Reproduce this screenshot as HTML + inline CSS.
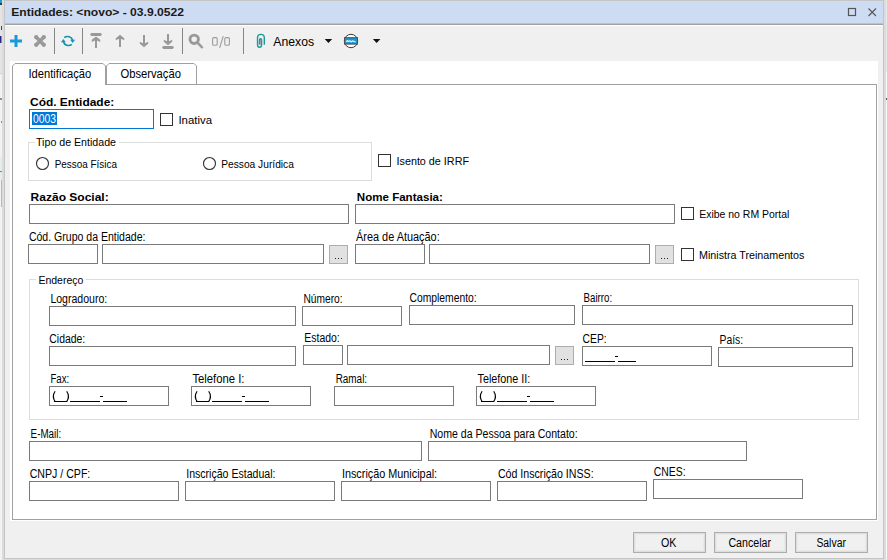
<!DOCTYPE html>
<html><head><meta charset="utf-8"><style>
html,body{margin:0;padding:0;width:887px;height:560px;overflow:hidden;background:#e8e8e8}
svg{display:block}
text{font-family:"Liberation Sans",sans-serif}
</style></head><body>
<svg width="887" height="560" viewBox="0 0 887 560">
<rect x="0" y="0" width="887" height="560" fill="#f2f2f2" />
<rect x="2" y="0" width="2" height="560" fill="#dcdcdc" />
<rect x="884" y="0" width="2" height="560" fill="#dcdcdc" />
<rect x="886" y="0" width="1" height="560" fill="#e8e8e8" />
<rect x="2" y="559" width="884" height="1" fill="#dcdcdc" />
<rect x="0" y="5" width="2" height="68" fill="#e4e4e4" />
<rect x="0" y="73" width="2" height="1" fill="#d0d0d0" />
<rect x="0" y="98" width="2" height="2" fill="#909090" />
<rect x="1" y="121" width="1" height="2" fill="#909090" />
<rect x="0" y="157" width="2" height="23" fill="#e4eeee" />
<rect x="0" y="171" width="2" height="1" fill="#3a9ad0" />
<rect x="1" y="180" width="1" height="27" fill="#b8b8b8" />
<rect x="0" y="0" width="2" height="3" fill="#1e9ac8" />
<rect x="0" y="3" width="2" height="2" fill="#343a40" />
<rect x="1" y="26" width="1" height="4" fill="#5a3a60" />
<rect x="0" y="36" width="1.5" height="7" fill="#2a2a85" />
<rect x="886" y="72" width="1" height="488" fill="#f6f6f6" />
<rect x="886" y="98" width="1" height="2" fill="#555" />
<rect x="4" y="0" width="880" height="559" fill="#c4c4c4" />
<rect x="5" y="1" width="878" height="557" fill="#f0f0f0" />
<rect x="5" y="0" width="878" height="1" fill="#c6c6c6" />
<rect x="5" y="1" width="878" height="22" fill="#cddcf3" />
<rect x="5" y="23" width="878" height="1" fill="#c0c0c0" />
<rect x="5" y="24" width="878" height="1" fill="#a0a0a0" />
<rect x="5" y="25" width="878" height="1" fill="#ffffff" />
<text x="11.2" y="16" font-size="11.5" font-weight="bold" fill="#1a1a1a" textLength="172.7" lengthAdjust="spacingAndGlyphs">Entidades: &lt;novo&gt; - 03.9.0522</text>
<rect x="848.5" y="8.5" width="7" height="7" fill="none" stroke="#555" stroke-width="1.2"/>
<path d="M868.5 8.5 L876 16 M876 8.5 L868.5 16" stroke="#555" stroke-width="1.1" fill="none"/>
<rect x="54" y="28" width="1" height="26" fill="#858585" />
<rect x="82" y="28" width="1" height="26" fill="#858585" />
<rect x="182" y="28" width="1" height="26" fill="#858585" />
<rect x="243" y="28" width="1" height="26" fill="#858585" />
<rect x="10" y="61" width="868" height="460" fill="#ffffff" />
<rect x="12" y="84" width="865" height="1" fill="#a0a0a0" />
<rect x="12" y="519" width="865" height="1" fill="#a0a0a0" />
<rect x="12" y="84" width="1" height="436" fill="#a0a0a0" />
<rect x="876" y="84" width="1" height="436" fill="#a0a0a0" />
<path d="M12.5 85 V66 L15 63.5 H103 L105.5 66 V85" fill="#fff" stroke="#a0a0a0" stroke-width="1"/>
<rect x="13" y="84" width="92" height="1" fill="#ffffff" />
<path d="M106.5 84 V66 L109 63.5 H194 L196.5 66 V84" fill="#fff" stroke="#a0a0a0" stroke-width="1"/>
<text x="28.5" y="78" font-size="12" fill="#000" textLength="62.8" lengthAdjust="spacingAndGlyphs">Identificação</text>
<text x="120.4" y="78" font-size="12" fill="#000" textLength="60.6" lengthAdjust="spacingAndGlyphs">Observação</text>
<text x="30" y="106" font-size="11.5" font-weight="bold" fill="#000" textLength="84.3" lengthAdjust="spacingAndGlyphs">Cód. Entidade:</text>
<rect x="29" y="109" width="125" height="1" fill="#0078d7" />
<rect x="29" y="128" width="125" height="1" fill="#0078d7" />
<rect x="29" y="109" width="1" height="20" fill="#0078d7" />
<rect x="153" y="109" width="1" height="20" fill="#0078d7" />
<rect x="30" y="110" width="123" height="18" fill="#ffffff" />
<rect x="32" y="112" width="25" height="13" fill="#0078d7" />
<text x="33" y="123" font-size="12" fill="#ffffff" textLength="23" lengthAdjust="spacingAndGlyphs">0003</text>
<rect x="160" y="113" width="13" height="1" fill="#333333" />
<rect x="160" y="125" width="13" height="1" fill="#333333" />
<rect x="160" y="113" width="1" height="13" fill="#333333" />
<rect x="172" y="113" width="1" height="13" fill="#333333" />
<rect x="161" y="114" width="11" height="11" fill="#ffffff" />
<text x="178.4" y="124" font-size="11.5" fill="#000" textLength="33.6" lengthAdjust="spacingAndGlyphs">Inativa</text>
<rect x="28" y="142" width="344" height="1" fill="#dcdcdc" />
<rect x="28" y="180" width="344" height="1" fill="#dcdcdc" />
<rect x="28" y="142" width="1" height="39" fill="#dcdcdc" />
<rect x="371" y="142" width="1" height="39" fill="#dcdcdc" />
<rect x="35" y="140" width="84" height="4" fill="#ffffff" />
<text x="36" y="146" font-size="11.5" fill="#000" textLength="80" lengthAdjust="spacingAndGlyphs">Tipo de Entidade</text>
<circle cx="42.5" cy="163.5" r="6" fill="#fff" stroke="#333" stroke-width="1.15"/>
<circle cx="209.5" cy="163.5" r="6" fill="#fff" stroke="#333" stroke-width="1.15"/>
<text x="54.7" y="168" font-size="11.5" fill="#000" textLength="62.3" lengthAdjust="spacingAndGlyphs">Pessoa Física</text>
<text x="221.2" y="168" font-size="11.5" fill="#000" textLength="72.7" lengthAdjust="spacingAndGlyphs">Pessoa Jurídica</text>
<rect x="378" y="154" width="13" height="1" fill="#333333" />
<rect x="378" y="166" width="13" height="1" fill="#333333" />
<rect x="378" y="154" width="1" height="13" fill="#333333" />
<rect x="390" y="154" width="1" height="13" fill="#333333" />
<rect x="379" y="155" width="11" height="11" fill="#ffffff" />
<text x="396.5" y="165" font-size="11.5" fill="#000" textLength="72.5" lengthAdjust="spacingAndGlyphs">Isento de IRRF</text>
<text x="30.6" y="201" font-size="11.5" font-weight="bold" fill="#000" textLength="78.1" lengthAdjust="spacingAndGlyphs">Razão Social:</text>
<text x="356.8" y="201" font-size="11.5" font-weight="bold" fill="#000" textLength="86.1" lengthAdjust="spacingAndGlyphs">Nome Fantasia:</text>
<rect x="29" y="204" width="320" height="1" fill="#7a7a7a" />
<rect x="29" y="223" width="320" height="1" fill="#7a7a7a" />
<rect x="29" y="204" width="1" height="20" fill="#7a7a7a" />
<rect x="348" y="204" width="1" height="20" fill="#7a7a7a" />
<rect x="30" y="205" width="318" height="18" fill="#fff" />
<rect x="355" y="204" width="320" height="1" fill="#7a7a7a" />
<rect x="355" y="223" width="320" height="1" fill="#7a7a7a" />
<rect x="355" y="204" width="1" height="20" fill="#7a7a7a" />
<rect x="674" y="204" width="1" height="20" fill="#7a7a7a" />
<rect x="356" y="205" width="318" height="18" fill="#fff" />
<rect x="681" y="207" width="13" height="1" fill="#333333" />
<rect x="681" y="219" width="13" height="1" fill="#333333" />
<rect x="681" y="207" width="1" height="13" fill="#333333" />
<rect x="693" y="207" width="1" height="13" fill="#333333" />
<rect x="682" y="208" width="11" height="11" fill="#ffffff" />
<text x="699.2" y="218" font-size="11.5" fill="#000" textLength="90.2" lengthAdjust="spacingAndGlyphs">Exibe no RM Portal</text>
<text x="28.9" y="241" font-size="12" fill="#000" textLength="116.6" lengthAdjust="spacingAndGlyphs">Cód. Grupo da Entidade:</text>
<rect x="28" y="244" width="70" height="1" fill="#7a7a7a" />
<rect x="28" y="263" width="70" height="1" fill="#7a7a7a" />
<rect x="28" y="244" width="1" height="20" fill="#7a7a7a" />
<rect x="97" y="244" width="1" height="20" fill="#7a7a7a" />
<rect x="29" y="245" width="68" height="18" fill="#fff" />
<rect x="102" y="244" width="222" height="1" fill="#7a7a7a" />
<rect x="102" y="263" width="222" height="1" fill="#7a7a7a" />
<rect x="102" y="244" width="1" height="20" fill="#7a7a7a" />
<rect x="323" y="244" width="1" height="20" fill="#7a7a7a" />
<rect x="103" y="245" width="220" height="18" fill="#fff" />
<rect x="329" y="245" width="19" height="1" fill="#adadad" />
<rect x="329" y="263" width="19" height="1" fill="#adadad" />
<rect x="329" y="245" width="1" height="19" fill="#adadad" />
<rect x="347" y="245" width="1" height="19" fill="#adadad" />
<rect x="330" y="246" width="17" height="17" fill="#e1e1e1" />
<rect x="335" y="258" width="1" height="1" fill="#222" />
<rect x="338" y="258" width="1" height="1" fill="#222" />
<rect x="341" y="258" width="1" height="1" fill="#222" />
<text x="356" y="241" font-size="12" fill="#000" textLength="83.7" lengthAdjust="spacingAndGlyphs">Área de Atuação:</text>
<rect x="355" y="244" width="70" height="1" fill="#7a7a7a" />
<rect x="355" y="263" width="70" height="1" fill="#7a7a7a" />
<rect x="355" y="244" width="1" height="20" fill="#7a7a7a" />
<rect x="424" y="244" width="1" height="20" fill="#7a7a7a" />
<rect x="356" y="245" width="68" height="18" fill="#fff" />
<rect x="429" y="244" width="221" height="1" fill="#7a7a7a" />
<rect x="429" y="263" width="221" height="1" fill="#7a7a7a" />
<rect x="429" y="244" width="1" height="20" fill="#7a7a7a" />
<rect x="649" y="244" width="1" height="20" fill="#7a7a7a" />
<rect x="430" y="245" width="219" height="18" fill="#fff" />
<rect x="655" y="245" width="19" height="1" fill="#adadad" />
<rect x="655" y="263" width="19" height="1" fill="#adadad" />
<rect x="655" y="245" width="1" height="19" fill="#adadad" />
<rect x="673" y="245" width="1" height="19" fill="#adadad" />
<rect x="656" y="246" width="17" height="17" fill="#e1e1e1" />
<rect x="661" y="258" width="1" height="1" fill="#222" />
<rect x="664" y="258" width="1" height="1" fill="#222" />
<rect x="667" y="258" width="1" height="1" fill="#222" />
<rect x="681" y="248" width="13" height="1" fill="#333333" />
<rect x="681" y="260" width="13" height="1" fill="#333333" />
<rect x="681" y="248" width="1" height="13" fill="#333333" />
<rect x="693" y="248" width="1" height="13" fill="#333333" />
<rect x="682" y="249" width="11" height="11" fill="#ffffff" />
<text x="699" y="259" font-size="11.5" fill="#000" textLength="105.4" lengthAdjust="spacingAndGlyphs">Ministra Treinamentos</text>
<rect x="29" y="279" width="830" height="1" fill="#dcdcdc" />
<rect x="29" y="419" width="830" height="1" fill="#dcdcdc" />
<rect x="29" y="279" width="1" height="141" fill="#dcdcdc" />
<rect x="858" y="279" width="1" height="141" fill="#dcdcdc" />
<rect x="36" y="276" width="50" height="6" fill="#ffffff" />
<text x="38.4" y="284" font-size="11.5" fill="#000" textLength="45" lengthAdjust="spacingAndGlyphs">Endereço</text>
<text x="50.4" y="303" font-size="12" fill="#000" textLength="56.8" lengthAdjust="spacingAndGlyphs">Logradouro:</text>
<rect x="49" y="306" width="247" height="1" fill="#7a7a7a" />
<rect x="49" y="325" width="247" height="1" fill="#7a7a7a" />
<rect x="49" y="306" width="1" height="20" fill="#7a7a7a" />
<rect x="295" y="306" width="1" height="20" fill="#7a7a7a" />
<rect x="50" y="307" width="245" height="18" fill="#fff" />
<text x="303.5" y="303" font-size="12" fill="#000" textLength="39.1" lengthAdjust="spacingAndGlyphs">Número:</text>
<rect x="302" y="306" width="100" height="1" fill="#7a7a7a" />
<rect x="302" y="325" width="100" height="1" fill="#7a7a7a" />
<rect x="302" y="306" width="1" height="20" fill="#7a7a7a" />
<rect x="401" y="306" width="1" height="20" fill="#7a7a7a" />
<rect x="303" y="307" width="98" height="18" fill="#fff" />
<text x="409.5" y="302" font-size="12" fill="#000" textLength="67.2" lengthAdjust="spacingAndGlyphs">Complemento:</text>
<rect x="409" y="305" width="166" height="1" fill="#7a7a7a" />
<rect x="409" y="324" width="166" height="1" fill="#7a7a7a" />
<rect x="409" y="305" width="1" height="20" fill="#7a7a7a" />
<rect x="574" y="305" width="1" height="20" fill="#7a7a7a" />
<rect x="410" y="306" width="164" height="18" fill="#fff" />
<text x="583.6" y="302" font-size="12" fill="#000" textLength="28.5" lengthAdjust="spacingAndGlyphs">Bairro:</text>
<rect x="582" y="305" width="271" height="1" fill="#7a7a7a" />
<rect x="582" y="324" width="271" height="1" fill="#7a7a7a" />
<rect x="582" y="305" width="1" height="20" fill="#7a7a7a" />
<rect x="852" y="305" width="1" height="20" fill="#7a7a7a" />
<rect x="583" y="306" width="269" height="18" fill="#fff" />
<text x="49.3" y="343" font-size="12" fill="#000" textLength="35.9" lengthAdjust="spacingAndGlyphs">Cidade:</text>
<rect x="49" y="346" width="247" height="1" fill="#7a7a7a" />
<rect x="49" y="365" width="247" height="1" fill="#7a7a7a" />
<rect x="49" y="346" width="1" height="20" fill="#7a7a7a" />
<rect x="295" y="346" width="1" height="20" fill="#7a7a7a" />
<rect x="50" y="347" width="245" height="18" fill="#fff" />
<text x="304.3" y="342" font-size="12" fill="#000" textLength="35.4" lengthAdjust="spacingAndGlyphs">Estado:</text>
<rect x="303" y="345" width="40" height="1" fill="#7a7a7a" />
<rect x="303" y="364" width="40" height="1" fill="#7a7a7a" />
<rect x="303" y="345" width="1" height="20" fill="#7a7a7a" />
<rect x="342" y="345" width="1" height="20" fill="#7a7a7a" />
<rect x="304" y="346" width="38" height="18" fill="#fff" />
<rect x="347" y="345" width="203" height="1" fill="#7a7a7a" />
<rect x="347" y="364" width="203" height="1" fill="#7a7a7a" />
<rect x="347" y="345" width="1" height="20" fill="#7a7a7a" />
<rect x="549" y="345" width="1" height="20" fill="#7a7a7a" />
<rect x="348" y="346" width="201" height="18" fill="#fff" />
<rect x="555" y="346" width="19" height="1" fill="#adadad" />
<rect x="555" y="364" width="19" height="1" fill="#adadad" />
<rect x="555" y="346" width="1" height="19" fill="#adadad" />
<rect x="573" y="346" width="1" height="19" fill="#adadad" />
<rect x="556" y="347" width="17" height="17" fill="#e1e1e1" />
<rect x="561" y="359" width="1" height="1" fill="#222" />
<rect x="564" y="359" width="1" height="1" fill="#222" />
<rect x="567" y="359" width="1" height="1" fill="#222" />
<text x="582.6" y="343" font-size="12" fill="#000" textLength="24" lengthAdjust="spacingAndGlyphs">CEP:</text>
<rect x="582" y="346" width="130" height="1" fill="#7a7a7a" />
<rect x="582" y="365" width="130" height="1" fill="#7a7a7a" />
<rect x="582" y="346" width="1" height="20" fill="#7a7a7a" />
<rect x="711" y="346" width="1" height="20" fill="#7a7a7a" />
<rect x="583" y="347" width="128" height="18" fill="#fff" />
<text x="719.5" y="344" font-size="12" fill="#000" textLength="23.6" lengthAdjust="spacingAndGlyphs">País:</text>
<rect x="718" y="347" width="135" height="1" fill="#7a7a7a" />
<rect x="718" y="366" width="135" height="1" fill="#7a7a7a" />
<rect x="718" y="347" width="1" height="20" fill="#7a7a7a" />
<rect x="852" y="347" width="1" height="20" fill="#7a7a7a" />
<rect x="719" y="348" width="133" height="18" fill="#fff" />
<text x="50.5" y="383" font-size="12" fill="#000" textLength="18.7" lengthAdjust="spacingAndGlyphs">Fax:</text>
<rect x="49" y="386" width="120" height="1" fill="#7a7a7a" />
<rect x="49" y="405" width="120" height="1" fill="#7a7a7a" />
<rect x="49" y="386" width="1" height="20" fill="#7a7a7a" />
<rect x="168" y="386" width="1" height="20" fill="#7a7a7a" />
<rect x="50" y="387" width="118" height="18" fill="#fff" />
<path d="M55.1 391.2 Q51.6 396.4 55.1 401.6 M66.7 391.2 Q70.2 396.4 66.7 401.6" fill="none" stroke="#000" stroke-width="1.15"/>
<rect x="54" y="401" width="13" height="1" fill="#000" />
<rect x="70" y="401" width="30" height="1" fill="#000" />
<rect x="100" y="396" width="3" height="1" fill="#000" />
<rect x="103" y="401" width="24" height="1" fill="#000" />
<text x="192.4" y="383" font-size="12" fill="#000" textLength="52.1" lengthAdjust="spacingAndGlyphs">Telefone I:</text>
<rect x="191" y="386" width="120" height="1" fill="#7a7a7a" />
<rect x="191" y="405" width="120" height="1" fill="#7a7a7a" />
<rect x="191" y="386" width="1" height="20" fill="#7a7a7a" />
<rect x="310" y="386" width="1" height="20" fill="#7a7a7a" />
<rect x="192" y="387" width="118" height="18" fill="#fff" />
<path d="M197.1 391.2 Q193.6 396.4 197.1 401.6 M208.7 391.2 Q212.2 396.4 208.7 401.6" fill="none" stroke="#000" stroke-width="1.15"/>
<rect x="196" y="401" width="13" height="1" fill="#000" />
<rect x="212" y="401" width="30" height="1" fill="#000" />
<rect x="242" y="396" width="3" height="1" fill="#000" />
<rect x="245" y="401" width="24" height="1" fill="#000" />
<text x="335.7" y="383" font-size="12" fill="#000" textLength="31.4" lengthAdjust="spacingAndGlyphs">Ramal:</text>
<rect x="334" y="386" width="120" height="1" fill="#7a7a7a" />
<rect x="334" y="405" width="120" height="1" fill="#7a7a7a" />
<rect x="334" y="386" width="1" height="20" fill="#7a7a7a" />
<rect x="453" y="386" width="1" height="20" fill="#7a7a7a" />
<rect x="335" y="387" width="118" height="18" fill="#fff" />
<text x="477.5" y="383" font-size="12" fill="#000" textLength="52.8" lengthAdjust="spacingAndGlyphs">Telefone II:</text>
<rect x="476" y="386" width="120" height="1" fill="#7a7a7a" />
<rect x="476" y="405" width="120" height="1" fill="#7a7a7a" />
<rect x="476" y="386" width="1" height="20" fill="#7a7a7a" />
<rect x="595" y="386" width="1" height="20" fill="#7a7a7a" />
<rect x="477" y="387" width="118" height="18" fill="#fff" />
<path d="M482.1 391.2 Q478.6 396.4 482.1 401.6 M493.7 391.2 Q497.2 396.4 493.7 401.6" fill="none" stroke="#000" stroke-width="1.15"/>
<rect x="481" y="401" width="13" height="1" fill="#000" />
<rect x="497" y="401" width="30" height="1" fill="#000" />
<rect x="527" y="396" width="3" height="1" fill="#000" />
<rect x="530" y="401" width="24" height="1" fill="#000" />
<rect x="585" y="361" width="30" height="1" fill="#000" />
<rect x="615" y="356" width="3" height="1" fill="#000" />
<rect x="618" y="361" width="18" height="1" fill="#000" />
<text x="30.6" y="438" font-size="12" fill="#000" textLength="30.6" lengthAdjust="spacingAndGlyphs">E-Mail:</text>
<rect x="29" y="441" width="393" height="1" fill="#7a7a7a" />
<rect x="29" y="460" width="393" height="1" fill="#7a7a7a" />
<rect x="29" y="441" width="1" height="20" fill="#7a7a7a" />
<rect x="421" y="441" width="1" height="20" fill="#7a7a7a" />
<rect x="30" y="442" width="391" height="18" fill="#fff" />
<text x="429.7" y="438" font-size="12" fill="#000" textLength="148" lengthAdjust="spacingAndGlyphs">Nome da Pessoa para Contato:</text>
<rect x="428" y="441" width="319" height="1" fill="#7a7a7a" />
<rect x="428" y="460" width="319" height="1" fill="#7a7a7a" />
<rect x="428" y="441" width="1" height="20" fill="#7a7a7a" />
<rect x="746" y="441" width="1" height="20" fill="#7a7a7a" />
<rect x="429" y="442" width="317" height="18" fill="#fff" />
<text x="29.7" y="478" font-size="12" fill="#000" textLength="60.6" lengthAdjust="spacingAndGlyphs">CNPJ / CPF:</text>
<rect x="29" y="481" width="150" height="1" fill="#7a7a7a" />
<rect x="29" y="500" width="150" height="1" fill="#7a7a7a" />
<rect x="29" y="481" width="1" height="20" fill="#7a7a7a" />
<rect x="178" y="481" width="1" height="20" fill="#7a7a7a" />
<rect x="30" y="482" width="148" height="18" fill="#fff" />
<text x="186.2" y="478" font-size="12" fill="#000" textLength="89.3" lengthAdjust="spacingAndGlyphs">Inscrição Estadual:</text>
<rect x="185" y="481" width="150" height="1" fill="#7a7a7a" />
<rect x="185" y="500" width="150" height="1" fill="#7a7a7a" />
<rect x="185" y="481" width="1" height="20" fill="#7a7a7a" />
<rect x="334" y="481" width="1" height="20" fill="#7a7a7a" />
<rect x="186" y="482" width="148" height="18" fill="#fff" />
<text x="341.9" y="478" font-size="12" fill="#000" textLength="95.2" lengthAdjust="spacingAndGlyphs">Inscrição Municipal:</text>
<rect x="341" y="481" width="150" height="1" fill="#7a7a7a" />
<rect x="341" y="500" width="150" height="1" fill="#7a7a7a" />
<rect x="341" y="481" width="1" height="20" fill="#7a7a7a" />
<rect x="490" y="481" width="1" height="20" fill="#7a7a7a" />
<rect x="342" y="482" width="148" height="18" fill="#fff" />
<text x="497.9" y="478" font-size="12" fill="#000" textLength="95.7" lengthAdjust="spacingAndGlyphs">Cód Inscrição INSS:</text>
<rect x="497" y="481" width="150" height="1" fill="#7a7a7a" />
<rect x="497" y="500" width="150" height="1" fill="#7a7a7a" />
<rect x="497" y="481" width="1" height="20" fill="#7a7a7a" />
<rect x="646" y="481" width="1" height="20" fill="#7a7a7a" />
<rect x="498" y="482" width="148" height="18" fill="#fff" />
<text x="653.8" y="476" font-size="12" fill="#000" textLength="31.9" lengthAdjust="spacingAndGlyphs">CNES:</text>
<rect x="653" y="479" width="150" height="1" fill="#7a7a7a" />
<rect x="653" y="498" width="150" height="1" fill="#7a7a7a" />
<rect x="653" y="479" width="1" height="20" fill="#7a7a7a" />
<rect x="802" y="479" width="1" height="20" fill="#7a7a7a" />
<rect x="654" y="480" width="148" height="18" fill="#fff" />
<rect x="633" y="532" width="73" height="1" fill="#adadad" />
<rect x="633" y="552" width="73" height="1" fill="#adadad" />
<rect x="633" y="532" width="1" height="21" fill="#adadad" />
<rect x="705" y="532" width="1" height="21" fill="#adadad" />
<rect x="634" y="533" width="71" height="19" fill="#dedede" />
<rect x="635" y="534" width="69" height="17" fill="#e9e9e9" />
<rect x="636" y="535" width="67" height="15" fill="#f0f0f0" />
<text x="660.9" y="547" font-size="12" fill="#000" textLength="15.4" lengthAdjust="spacingAndGlyphs">OK</text>
<rect x="714" y="532" width="73" height="1" fill="#adadad" />
<rect x="714" y="552" width="73" height="1" fill="#adadad" />
<rect x="714" y="532" width="1" height="21" fill="#adadad" />
<rect x="786" y="532" width="1" height="21" fill="#adadad" />
<rect x="715" y="533" width="71" height="19" fill="#dedede" />
<rect x="716" y="534" width="69" height="17" fill="#e9e9e9" />
<rect x="717" y="535" width="67" height="15" fill="#f0f0f0" />
<text x="728.4" y="547" font-size="12" fill="#000" textLength="42.6" lengthAdjust="spacingAndGlyphs">Cancelar</text>
<rect x="795" y="532" width="73" height="1" fill="#adadad" />
<rect x="795" y="552" width="73" height="1" fill="#adadad" />
<rect x="795" y="532" width="1" height="21" fill="#adadad" />
<rect x="867" y="532" width="1" height="21" fill="#adadad" />
<rect x="796" y="533" width="71" height="19" fill="#dedede" />
<rect x="797" y="534" width="69" height="17" fill="#e9e9e9" />
<rect x="798" y="535" width="67" height="15" fill="#f0f0f0" />
<text x="816.4" y="547" font-size="12" fill="#000" textLength="29.5" lengthAdjust="spacingAndGlyphs">Salvar</text>

<path d="M10 39.5 H22 V42.5 H10 Z M14.5 35 H17.5 V47 H14.5 Z" fill="#1a99d6"/>
<g stroke="#9a9a9a" stroke-width="3.7" stroke-linecap="round">
<path d="M36.3 37.3 L43.7 44.7 M43.7 37.3 L36.3 44.7"/>
</g>
<g fill="#9a9a9a"><circle cx="36.2" cy="37.2" r="2.1"/><circle cx="43.8" cy="37.2" r="2.1"/><circle cx="36.2" cy="44.8" r="2.1"/><circle cx="43.8" cy="44.8" r="2.1"/></g>
<g fill="none" stroke="#17939e" stroke-width="1.7">
 <path d="M64.2 37.6 A5.2 4.6 0 0 1 72.6 40.2"/>
 <path d="M71.8 44.4 A5.2 4.6 0 0 1 63.4 41.8"/>
</g>
<path d="M70.2 39.8 L75.1 39.8 L72.6 43 Z" fill="#1a8fd0"/>
<path d="M60.9 42.2 L65.8 42.2 L63.4 39 Z" fill="#1a8fd0"/>
<g fill="#999">
 <path d="M90 34.5 L91.3 33 H100.7 L102 34.5 L100.7 36 H91.3 Z"/>
 <path d="M91.8 39.8 L96 36.4 L100.2 39.8 L100.2 41.9 L97 40.4 L97 48 L95 48 L95 40.4 L91.8 41.9 Z"/>
 <path d="M115.8 38.3 L120 34.8 L124.2 38.3 L124.2 40.2 L121 38.8 L121 47 L119 47 L119 38.8 L115.8 40.2 Z"/>
 <path d="M139.8 43.7 L144 47.2 L148.2 43.7 L148.2 41.8 L145 43.2 L145 35 L143 35 L143 43.2 L139.8 41.8 Z"/>
 <path d="M163.8 41.7 L168 45.2 L172.2 41.7 L172.2 39.8 L169 41.2 L169 34 L167 34 L167 41.2 L163.8 39.8 Z"/>
 <path d="M162 47.5 L163.3 46 H172.7 L174 47.5 L172.7 49 H163.3 Z"/>
</g>
<circle cx="194.2" cy="39.3" r="4.2" fill="none" stroke="#999" stroke-width="2.9"/>
<path d="M197.8 42.9 L202.6 48" stroke="#999" stroke-width="2.5"/>
<g fill="none" stroke="#9c9c9c" stroke-width="1.1"><rect x="212.6" y="37.6" width="4.6" height="7.6" rx="1.3"/><rect x="224.8" y="37.6" width="4.6" height="7.6" rx="1.3"/><path d="M223.3 36.2 L219.6 47.9"/></g>
<rect x="260" y="39.5" width="1.2" height="5.5" fill="#b9b0b0"/>
<path d="M264.3 44.8 V37.8 A3.4 3.4 0 0 0 257.5 37.8 V44.4 A2.05 2.8 0 0 0 261.6 44.4 V39.9 A1.05 1.1 0 0 0 259.5 39.9 V44.6" fill="none" stroke="#1f9a9c" stroke-width="1.4"/>
<text x="273.3" y="45.8" font-size="12.5" fill="#000" textLength="40.8" lengthAdjust="spacingAndGlyphs">Anexos</text>
<path d="M324.7 39 H332.2 L328.45 43 Z" fill="#111"/>
<circle cx="351" cy="41" r="6.7" fill="#fff" stroke="#3a3a3a" stroke-width="1"/>
<rect x="344.5" y="37.7" width="13" height="6.4" fill="#1a98d2" stroke="#5a4a48" stroke-width="1"/>
<path d="M346.2 42 L347.4 40.6 L348.6 41.6 L350 40.8 L351.4 41.8 L352.8 40.8 L354.2 41.6 L355.6 42" fill="none" stroke="#f4fbff" stroke-width="1.1"/>
<path d="M372.9 39 H380.4 L376.65 43 Z" fill="#111"/>

</svg>
</body></html>
